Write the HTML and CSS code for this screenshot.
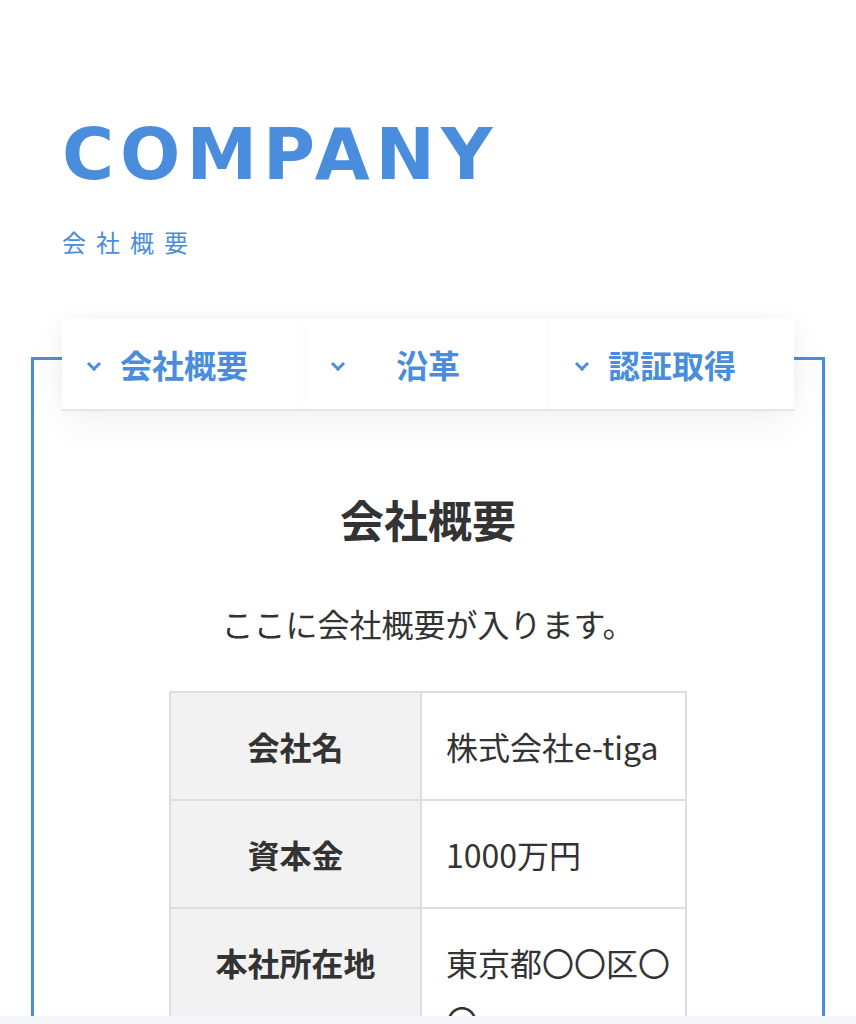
FILE: index.html
```html
<!DOCTYPE html>
<html lang="ja">
<head>
    <meta charset="UTF-8">
    <meta name="viewport" content="width=device-width, initial-scale=1.0">
    <title>COMPANY</title>
    <link rel="stylesheet" href="styles.css">
</head>
<body>
    <div class="page">
        <header class="page-head">
            <h1 class="page-title">COMPANY</h1>
            <p class="page-sub">会社概要</p>
        </header>

        <section class="company-box">
            <nav class="tabs">
                <a class="tab" href="#outline"><span class="tab-arrow"></span>会社概要</a>
                <a class="tab" href="#history"><span class="tab-arrow"></span>沿革</a>
                <a class="tab" href="#cert"><span class="tab-arrow"></span>認証取得</a>
            </nav>

            <div class="outline" id="outline">
                <h2 class="outline-title">会社概要</h2>
                <p class="outline-lead">ここに会社概要が入ります。</p>
                <table class="info-table">
                    <tr>
                        <th>会社名</th>
                        <td>株式会社e-tiga</td>
                    </tr>
                    <tr>
                        <th>資本金</th>
                        <td>1000万円</td>
                    </tr>
                    <tr>
                        <th>本社所在地</th>
                        <td>東京都〇〇区〇〇</td>
                    </tr>
                </table>
            </div>
        </section>
    </div>
</body>
</html>
```

FILE: styles.css
```css
html, body {
    margin: 0;
    padding: 0;
}
body {
    background-color: #f6f7fb;
    font-family: "Noto Sans CJK JP", "Noto Sans", sans-serif;
    color: #333;
}
.page {
    height: 1016px;
    overflow: hidden;
    background-color: #fff;
    padding: 0 31px;
}
.page-head {
    padding: 112px 0 0 31px;
}
.page-title {
    margin: 0;
    font-family: "DejaVu Sans", "Liberation Sans", sans-serif;
    font-weight: 700;
    font-size: 71px;
    line-height: 86px;
    letter-spacing: 6px;
    color: #4a8ddc;
}
.page-sub {
    margin: 26px 0 0;
    font-size: 24px;
    letter-spacing: 10px;
    color: #4a8ddc;
}
.company-box {
    margin-top: 98px;
    border: 3px solid #4a8ddc;
    border-bottom: none;
    padding: 0 28px;
}
.tabs {
    display: flex;
    margin-top: -41px;
    background-color: #fff;
    box-shadow: 0 10px 40px rgba(0, 0, 0, 0.06);
    border-bottom: 2px solid #e8e8e8;
}
.tab {
    flex: 1;
    position: relative;
    height: 90px;
    display: flex;
    align-items: center;
    justify-content: center;
    font-size: 32px;
    font-weight: 700;
    color: #4a8ddc;
    text-decoration: none;
    background-color: #fff;
    box-shadow: 0 0 14px rgba(0, 0, 0, 0.03);
}
.tab-arrow {
    position: absolute;
    left: 27px;
    top: 40px;
    width: 7px;
    height: 7px;
    border-right: 3px solid #4a8ddc;
    border-bottom: 3px solid #4a8ddc;
    transform: rotate(45deg);
}
.outline {
    text-align: center;
    padding-top: 80px;
}
.outline-title {
    margin: 0;
    font-size: 44px;
    line-height: 56px;
    font-weight: 700;
}
.outline-lead {
    margin: 52px 0 0;
    font-size: 32px;
    line-height: 48px;
}
.info-table {
    margin: 44px auto 0;
    border-collapse: collapse;
    width: 518px;
    font-size: 32px;
}
.info-table th, .info-table td {
    border: 2px solid #ddd;
    padding: 24px 14px 24px 24px;
    line-height: 58px;
    vertical-align: top;
}
.info-table th {
    width: 212px;
    padding-right: 19px;
    padding-left: 19px;
    background-color: #f2f2f2;
    font-weight: 700;
}
.info-table td {
    text-align: left;
    width: 226px;
}
```
